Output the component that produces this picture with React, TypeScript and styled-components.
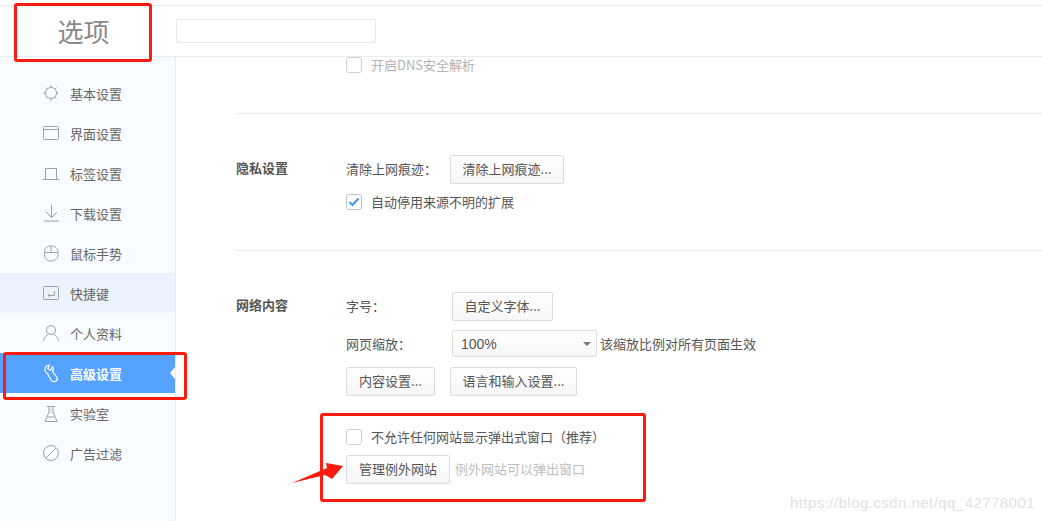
import React from "react";
import styled, { createGlobalStyle } from "styled-components";

const GlobalStyle = createGlobalStyle`
  html, body {
    margin: 0;
    padding: 0;
    background: #fff;
    overflow: hidden;
  }
  body {
    font-family: "Noto Sans CJK SC", "Noto Sans", sans-serif;
    font-size: 13px;
    color: #555;
  }
`;

const iconProps = {
  width: 20,
  height: 20,
  viewBox: "0 0 20 20",
  fill: "none",
  stroke: "currentColor",
  strokeWidth: 1,
};

const GearIcon = () => (
  <svg {...iconProps}>
    <circle cx="10" cy="10" r="5.5" />
    <path d="M10 2v2M10 16v2M2.500 10h1.800M15.700 10h1.800M4.500 4.500l1.400 1.400M14.100 14.100l1.400 1.400M15.500 4.500l-1.400 1.400M5.900 14.100l-1.400 1.400" />
  </svg>
);
const WindowIcon = () => (
  <svg {...iconProps}>
    <rect x="2.500" y="3.500" width="15" height="13" rx="1" />
    <path d="M2.500 6.500h15" />
  </svg>
);
const TabIcon = () => (
  <svg {...iconProps}>
    <path d="M4.500 16V5.500h11V16M1.500 16.500h17" />
  </svg>
);
const DownloadIcon = () => (
  <svg {...iconProps}>
    <path d="M10.500 2v12M5 9l5.500 5.500L16 9M3 18h15" />
  </svg>
);
const MouseIcon = () => (
  <svg {...iconProps}>
    <path d="M3.500 9c0-3.500 2.500-6 6.500-6s7 2.500 7 6v3c0 3.500-3 6-7 6s-6.500-2.500-6.500-6zM3.500 9.500h13.500M10 3v6.500" />
  </svg>
);
const KeyIcon = () => (
  <svg {...iconProps}>
    <rect x="2.500" y="3.500" width="15" height="13" rx="1" />
    <path d="M13.500 8v4.500H7M8.500 11l-1.700 1.500L8.500 14" />
  </svg>
);
const UserIcon = () => (
  <svg {...iconProps}>
    <circle cx="10" cy="7" r="4.500" />
    <path d="M2.500 18c.5-3.500 3-6 5-6.800M17.500 18c-.5-3.500-3-6-5-6.800" />
  </svg>
);
const WrenchIcon = () => (
  <svg {...iconProps} stroke="#fff" strokeWidth={1.2}>
    <path d="M8.500 2C5.500 2 3.500 4.500 4 7.500c.3 1.500 1.200 2.500 2.500 3L10 17c1 1.800 3.500 2.200 5 1 1.500-1.200 1.500-3.200.5-4.500l-4-5c1-1.500 1-3.500 0-4.700L9.500 7.200 6.800 5.800z" />
  </svg>
);
const FlaskIcon = () => (
  <svg {...iconProps}>
    <path d="M6 3.500h8M8 3.500V9L4 18.500h12L12 9V3.500M6.500 14h7M10 6v1M10 9v1" />
  </svg>
);
const BanIcon = () => (
  <svg {...iconProps}>
    <circle cx="10" cy="10" r="7.500" />
    <path d="M5 15 15 5" />
  </svg>
);

const Page = styled.div`
  position: relative;
  width: 1042px;
  height: 521px;
  overflow: hidden;
  display: flex;
  flex-direction: column;
  background: #fff;
`;

const Header = styled.header`
  height: 50px;
  margin-top: 5px;
  flex: none;
  display: flex;
  align-items: center;
  border-top: 1px solid #e9e9e9;
  border-bottom: 1px solid #e9ecef;
`;

const Title = styled.h1`
  width: 176px;
  flex: none;
  margin: 0;
  padding: 0 9px 2px 0;
  box-sizing: border-box;
  text-align: center;
  font-size: 26px;
  font-weight: 400;
  color: #8a8a8a;
`;

const SearchInput = styled.input`
  width: 200px;
  height: 24px;
  box-sizing: border-box;
  border: 1px solid #e6e6e6;
  border-radius: 2px;
  background: #fff;
  margin-top: -1px;
  outline: none;
`;

const Body = styled.div`
  flex: 1;
  display: flex;
  min-height: 0;
`;

const Sidebar = styled.nav`
  width: 176px;
  flex: none;
  box-sizing: border-box;
  padding-top: 16px;
  background: #f8fbff;
  border-right: 1px solid #e4eaf2;
`;

const NavItem = styled.div<{ $active?: boolean; $hover?: boolean }>`
  position: relative;
  height: 40px;
  box-sizing: border-box;
  display: flex;
  align-items: center;
  gap: 9px;
  padding-left: 41px;
  font-size: 13px;
  color: ${(p) => (p.$active ? "#fff" : "#666")};
  font-weight: ${(p) => (p.$active ? 700 : 400)};
  background: ${(p) => (p.$active ? "#55a3ff" : p.$hover ? "#ebf4fe" : "transparent")};
  ${(p) => (p.$hover ? "border-top: 1px solid #e6f0fb; border-bottom: 1px solid #f0f6fd;" : "")}

  svg {
    color: #a0a0a0;
    flex: none;
  }
`;

const ActiveNotch = styled.span`
  position: absolute;
  right: 0;
  top: 14px;
  width: 0;
  height: 0;
  border-top: 6px solid transparent;
  border-bottom: 6px solid transparent;
  border-right: 5px solid #fff;
`;

const Main = styled.main`
  flex: 1;
  min-width: 0;
  padding-left: 60px;
`;

const Section = styled.section<{ $height: number; $noBorder?: boolean }>`
  height: ${(p) => p.$height}px;
  box-sizing: border-box;
  display: flex;
  border-bottom: ${(p) => (p.$noBorder ? "none" : "1px solid #ececec")};
`;

const SectionTitle = styled.h2`
  width: 110px;
  flex: none;
  margin: 40px 0 0;
  font-size: 13px;
  line-height: 28px;
  font-weight: 700;
  color: #555;
`;

const SectionBody = styled.div<{ $top: number; $left?: number }>`
  padding-top: ${(p) => p.$top}px;
  padding-left: ${(p) => p.$left ?? 0}px;
  display: flex;
  flex-direction: column;
`;

const Row = styled.div<{ $mt?: number; $gap?: number }>`
  display: flex;
  align-items: center;
  margin-top: ${(p) => p.$mt ?? 0}px;
  gap: ${(p) => p.$gap ?? 0}px;
`;

const FieldLabel = styled.span<{ $width: number; $low?: boolean }>`
  width: ${(p) => p.$width}px;
  flex: none;
  padding-bottom: ${(p) => (p.$low ? 0 : 2)}px;
  color: #555;
`;

const Button = styled.button<{ $width: number }>`
  width: ${(p) => p.$width}px;
  height: 29px;
  padding: 0 0 2px;
  box-sizing: border-box;
  border: 1px solid #dcdcdc;
  border-radius: 2px;
  background: linear-gradient(#fff, #f6f6f6);
  font-family: inherit;
  font-size: 13px;
  color: #555;
`;

const Select = styled.div`
  position: relative;
  width: 145px;
  height: 27px;
  box-sizing: border-box;
  padding: 1px 0 0 8px;
  display: flex;
  align-items: center;
  border: 1px solid #dcdcdc;
  border-radius: 2px;
  background: linear-gradient(#fff, #f7f7f7);
  color: #555;
  font-family: "Liberation Sans", sans-serif;
  font-size: 14px;

  &::after {
    content: "";
    position: absolute;
    right: 5px;
    top: 11px;
    border-top: 4px solid #777;
    border-left: 4px solid transparent;
    border-right: 4px solid transparent;
  }
`;

const Box = styled.span<{ $checked?: boolean }>`
  width: 16px;
  height: 16px;
  box-sizing: border-box;
  flex: none;
  display: flex;
  align-items: center;
  justify-content: center;
  border: 1px solid ${(p) => (p.$checked ? "#b9c4d0" : "#cfcfcf")};
  border-radius: 3px;
  background: #fff;
`;

const CheckRow = styled.label<{ $muted?: boolean; $mt?: number }>`
  display: flex;
  align-items: center;
  gap: 9px;
  height: 16px;
  margin-top: ${(p) => p.$mt ?? 0}px;
  color: ${(p) => (p.$muted ? "#b4b4b4" : "#555")};
`;

const CheckText = styled.span`
  padding-bottom: 2px;
`;

const Hint = styled.span<{ $muted?: boolean }>`
  margin-left: ${(p) => (p.$muted ? 5 : 3)}px;
  padding-bottom: ${(p) => (p.$muted ? 2 : 0)}px;
  color: ${(p) => (p.$muted ? "#bdbdbd" : "#555")};
`;

/* screenshot annotations on top of the page */
const RedBox = styled.div<{ $x: number; $y: number; $w: number; $h: number }>`
  position: absolute;
  left: ${(p) => p.$x}px;
  top: ${(p) => p.$y}px;
  width: ${(p) => p.$w}px;
  height: ${(p) => p.$h}px;
  box-sizing: border-box;
  border: 3px solid #ff1a0f;
  border-radius: 3px;
`;

const Arrow = styled.svg`
  position: absolute;
  left: 290px;
  top: 460px;
`;

const Watermark = styled.div`
  position: absolute;
  right: 7px;
  bottom: 10px;
  font-family: "Liberation Sans", sans-serif;
  font-size: 15px;
  letter-spacing: 0.45px;
  color: #e2e2e2;
`;

const navItems = [
  { label: "基本设置", icon: <GearIcon /> },
  { label: "界面设置", icon: <WindowIcon /> },
  { label: "标签设置", icon: <TabIcon /> },
  { label: "下载设置", icon: <DownloadIcon /> },
  { label: "鼠标手势", icon: <MouseIcon /> },
  { label: "快捷键", icon: <KeyIcon />, hover: true },
  { label: "个人资料", icon: <UserIcon /> },
  { label: "高级设置", icon: <WrenchIcon />, active: true },
  { label: "实验室", icon: <FlaskIcon /> },
  { label: "广告过滤", icon: <BanIcon /> },
];

const App: React.FC = () => {
  return (
    <Page>
      <GlobalStyle />
      <Header>
        <Title>选项</Title>
        <SearchInput />
      </Header>
      <Body>
        <Sidebar>
          {navItems.map((item) => (
            <NavItem key={item.label} $active={item.active} $hover={item.hover}>
              {item.icon}
              <span>{item.label}</span>
              {item.active && <ActiveNotch />}
            </NavItem>
          ))}
        </Sidebar>
        <Main>
          <Section $height={57}>
            <SectionBody $top={0} $left={110}>
              <CheckRow $muted>
                <Box />
                <CheckText>开启DNS安全解析</CheckText>
              </CheckRow>
            </SectionBody>
          </Section>
          <Section $height={137}>
            <SectionTitle>隐私设置</SectionTitle>
            <SectionBody $top={41}>
              <Row>
                <FieldLabel $width={104}>清除上网痕迹：</FieldLabel>
                <Button $width={114}>清除上网痕迹...</Button>
              </Row>
              <CheckRow $mt={10}>
                <Box $checked>
                  <svg width="12" height="10" viewBox="0 0 12 10">
                    <path d="M1.500 5l3 3 6-6.500" fill="none" stroke="#3e97f5" strokeWidth="2" />
                  </svg>
                </Box>
                <CheckText>自动停用来源不明的扩展</CheckText>
              </CheckRow>
            </SectionBody>
          </Section>
          <Section $height={200} $noBorder>
            <SectionTitle>网络内容</SectionTitle>
            <SectionBody $top={41}>
              <Row>
                <FieldLabel $width={106}>字号：</FieldLabel>
                <Button $width={101}>自定义字体...</Button>
              </Row>
              <Row $mt={9}>
                <FieldLabel $width={106} $low>网页缩放：</FieldLabel>
                <Select>100%</Select>
                <Hint>该缩放比例对所有页面生效</Hint>
              </Row>
              <Row $mt={10} $gap={15}>
                <Button $width={89}>内容设置...</Button>
                <Button $width={127}>语言和输入设置...</Button>
              </Row>
              <CheckRow $mt={33}>
                <Box />
                <CheckText>不允许任何网站显示弹出式窗口（推荐）</CheckText>
              </CheckRow>
              <Row $mt={10}>
                <Button $width={104}>管理例外网站</Button>
                <Hint $muted>例外网站可以弹出窗口</Hint>
              </Row>
            </SectionBody>
          </Section>
        </Main>
      </Body>

      <RedBox $x={14} $y={3} $w={138} $h={59} />
      <RedBox $x={3} $y={352} $w={184} $h={48} />
      <RedBox $x={320} $y={413} $w={326} $h={89} />
      <Arrow width="56" height="26" viewBox="0 0 56 26">
        <path d="M2 23 L37 8 L36 3 L53 6 L42 19 L35 15 Z" fill="#ff1a0f" />
      </Arrow>
      <Watermark>https://blog.csdn.net/qq_42778001</Watermark>
    </Page>
  );
};

export default App;
